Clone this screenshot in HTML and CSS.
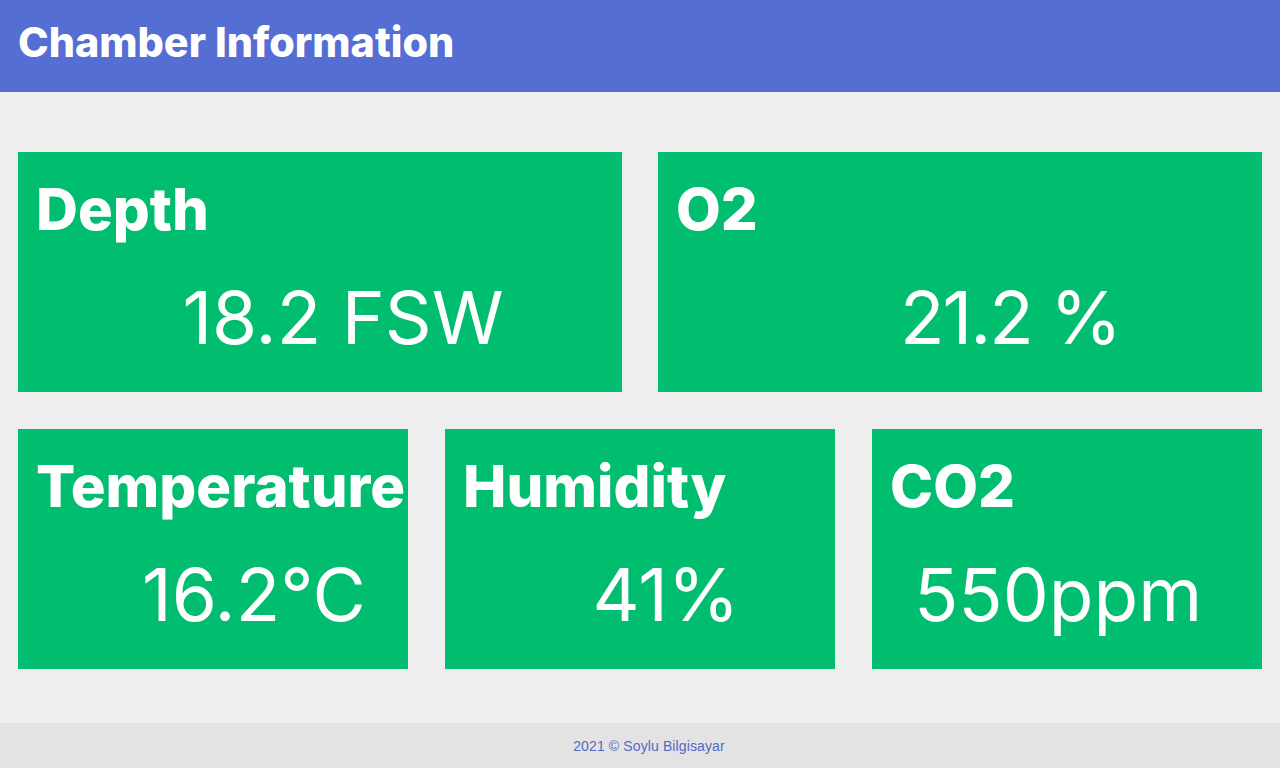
FILE: index.html
```html
<!DOCTYPE html>
<html lang="en">
<head>
<meta charset="utf-8">
<title>Chamber Information</title>
<link rel="stylesheet" href="styles.css">
</head>
<body>
<header class="topbar">
  <h1 class="title">Chamber Information</h1>
</header>
<main class="content">
  <section class="row row-two">
    <div class="card">
      <div class="label">Depth</div>
      <div class="value shift-depth">18.2 FSW</div>
    </div>
    <div class="card">
      <div class="label">O2</div>
      <div class="value shift-o2">21.2 %</div>
    </div>
  </section>
  <section class="row row-three">
    <div class="card">
      <div class="label">Temperature</div>
      <div class="value shift-temp">16.2°C</div>
    </div>
    <div class="card">
      <div class="label">Humidity</div>
      <div class="value shift-hum">41%</div>
    </div>
    <div class="card">
      <div class="label">CO2</div>
      <div class="value shift-co2">550ppm</div>
    </div>
  </section>
</main>
<footer class="footer">2021 © Soylu Bilgisayar</footer>
</body>
</html>
```

FILE: styles.css
```css
* { box-sizing: border-box; }
html, body { margin: 0; padding: 0; }
body {
  height: 768px;
  display: flex;
  flex-direction: column;
  background: #eeeeee;
  font-family: Inter, "Open Sans", sans-serif;
  overflow: hidden;
}
.topbar {
  height: 92px;
  background: #546ed3;
  padding: 0 18px;
}
.title {
  margin: 0;
  padding-top: 18px;
  font-size: 41.3px;
  line-height: 48px;
  font-weight: 800;
  color: #ffffff;
}
.content {
  padding: 60px 18px 0;
  display: flex;
  flex-direction: column;
  gap: 37px;
}
.row { display: grid; }
.row-two { grid-template-columns: 1fr 1fr; column-gap: 36px; }
.row-three { grid-template-columns: 1fr 1fr 1fr; column-gap: 37px; }
.card {
  height: 240px;
  background: #00bd70;
  color: #ffffff;
  padding: 28px 0 0 18px;
  overflow: hidden;
}
.label {
  font-size: 58px;
  line-height: 58px;
  font-weight: 800;
  white-space: nowrap;
}
.value {
  margin-top: 43px;
  margin-left: -18px;
  font-size: 73px;
  line-height: 73px;
  font-weight: 400;
  text-align: center;
  white-space: nowrap;
}
.shift-depth { padding-left: 46px; }
.shift-o2 { padding-left: 100px; letter-spacing: -2px; }
.shift-temp { padding-left: 82px; }
.shift-hum { padding-left: 52px; }
.shift-co2 { padding-right: 18px; }
.footer {
  margin-top: auto;
  height: 45px;
  padding: 2px 0 0 18px;
  background: #e3e3e3;
  color: #5469c5;
  font-family: "Liberation Sans", Arial, sans-serif;
  font-size: 14px;
  letter-spacing: 0.12px;
  line-height: 43px;
  text-align: center;
}
```
